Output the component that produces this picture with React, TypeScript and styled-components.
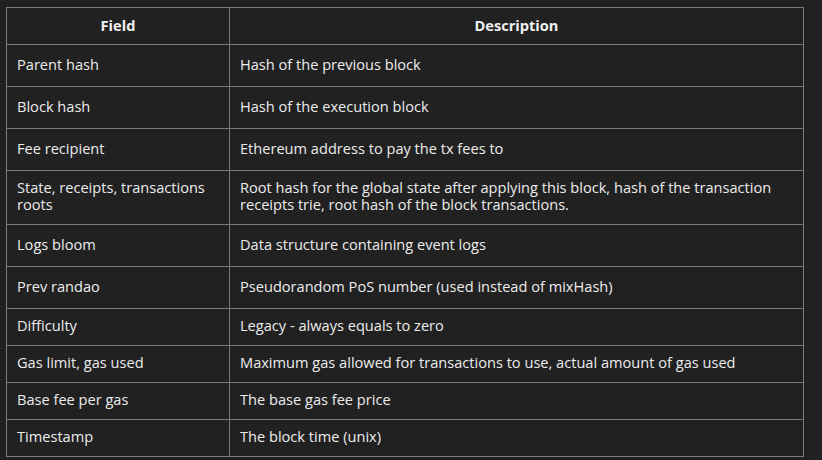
import React from "react";
import styled, { createGlobalStyle } from "styled-components";

const Global = createGlobalStyle`
  html, body {
    margin: 0;
    padding: 0;
    background: #212121;
  }
  body {
    font-family: "Open Sans", "Liberation Sans", sans-serif;
    color: #ececec;
  }
`;

const Page = styled.div`
  padding: 7px 18px 0 6px;
  width: 822px;
  height: 460px;
  box-sizing: border-box;
  background: #212121;
  overflow: hidden;
`;

const Table = styled.table`
  width: 798px;
  border-collapse: collapse;
  table-layout: fixed;
  font-size: 14.6px;
  line-height: 17px;
`;

const Row = styled.tr<{ $h: number }>`
  height: ${(p) => p.$h}px;
`;

const HeadCell = styled.th`
  border: 1px solid #7b7b7b;
  font-weight: 700;
  text-align: center;
  padding: 0 10px 2px;
  color: #f0f0f0;
`;

const Cell = styled.td`
  border: 1px solid #7b7b7b;
  padding: 0 10px 3px;
  vertical-align: middle;
  color: #ececec;
`;

const rows: [string, string, number][] = [
  ["Parent hash", "Hash of the previous block", 42],
  ["Block hash", "Hash of the execution block", 42],
  ["Fee recipient", "Ethereum address to pay the tx fees to", 42],
  [
    "State, receipts, transactions roots",
    "Root hash for the global state after applying this block, hash of the transaction receipts trie, root hash of the block transactions.",
    54,
  ],
  ["Logs bloom", "Data structure containing event logs", 42],
  ["Prev randao", "Pseudorandom PoS number (used instead of mixHash)", 42],
  ["Difficulty", "Legacy - always equals to zero", 37],
  ["Gas limit, gas used", "Maximum gas allowed for transactions to use, actual amount of gas used", 37],
  ["Base fee per gas", "The base gas fee price", 37],
  ["Timestamp", "The block time (unix)", 37],
];

export default function App() {
  return (
    <Page>
      <Global />
      <Table>
        <colgroup>
          <col style={{ width: 223 }} />
          <col />
        </colgroup>
        <thead>
          <Row $h={37}>
            <HeadCell>Field</HeadCell>
            <HeadCell>Description</HeadCell>
          </Row>
        </thead>
        <tbody>
          {rows.map(([f, d, h]) => (
            <Row key={f} $h={h}>
              <Cell>{f}</Cell>
              <Cell>{d}</Cell>
            </Row>
          ))}
        </tbody>
      </Table>
    </Page>
  );
}
